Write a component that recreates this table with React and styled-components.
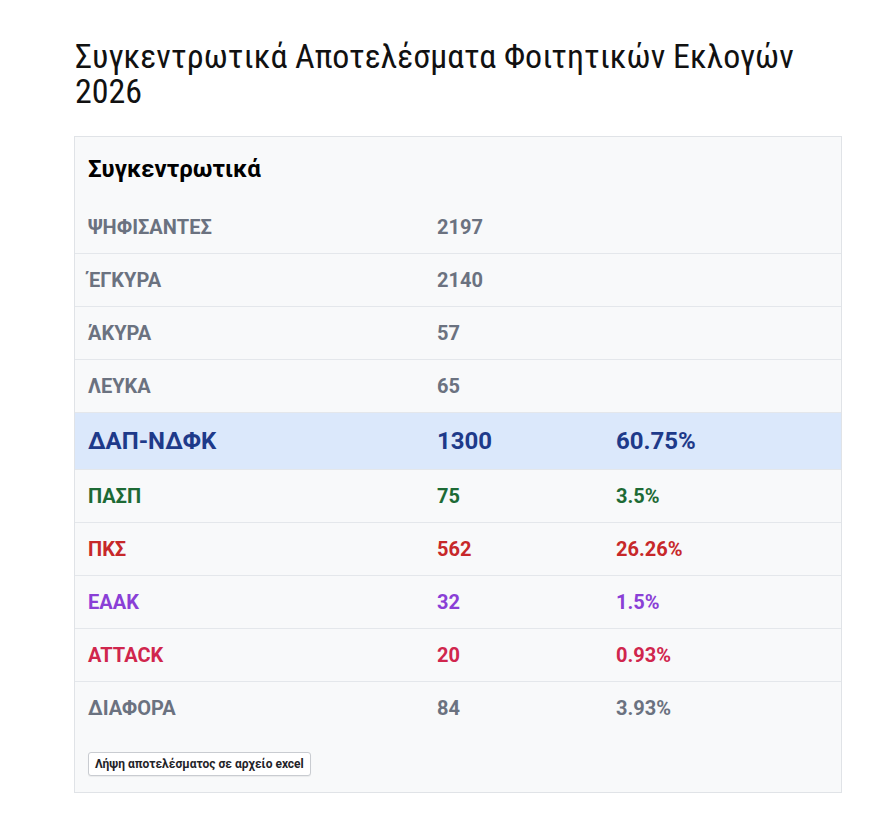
import React from 'react';
import styled, { createGlobalStyle } from 'styled-components';

const GlobalStyle = createGlobalStyle`
  html, body {
    margin: 0;
    padding: 0;
    background: #ffffff;
  }
  body {
    font-family: Roboto, "Noto Sans", Arial, sans-serif;
    color: #212529;
  }
`;

const Page = styled.div`
  padding: 39px 52px 20px 74px;
`;

const Title = styled.h1`
  max-width: 768px;
  margin: 0 0 27px 1px;
  font-family: "Liberation Sans Narrow", "Roboto Condensed", Roboto, sans-serif;
  font-weight: 400;
  font-size: 34px;
  line-height: 35px;
  color: #111111;
`;

const Card = styled.div`
  width: 768px;
  box-sizing: border-box;
  background: #f8f9fa;
  border: 1px solid #e0e3e7;
`;

const CardHeader = styled.div`
  padding: 16px 13px;
  font-size: 24px;
  line-height: 32px;
  font-weight: 700;
  color: #000000;
`;

const Row = styled.div`
  display: grid;
  grid-template-columns: 349px 179px 1fr;
  padding: ${p => (p.$lead ? '12px 13px' : '13px 13px')};
  font-size: ${p => (p.$lead ? '24px' : '20px')};
  line-height: ${p => (p.$lead ? '33px' : '27px')};
  font-weight: 700;
  color: ${p => p.$color};
  background: ${p => (p.$lead ? '#dbe8fb' : 'transparent')};
  border-top: ${p => (p.$first ? 'none' : '1px solid #e4e7eb')};
  margin-top: ${p => (p.$first ? '0' : '-1px')};
`;

const Cell = styled.div`
  white-space: nowrap;
`;

const Footer = styled.div`
  padding: 17px 13px 16px;
`;

const ExportButton = styled.button`
  font-family: Roboto, Arial, sans-serif;
  font-size: 12px;
  font-weight: 700;
  line-height: 16px;
  color: #1f2328;
  background: #ffffff;
  border: 1px solid #c9ccd1;
  border-radius: 3px;
  padding: 3px 6px 3px;
  box-shadow: 0 1px 1px rgba(0, 0, 0, 0.06);
  cursor: pointer;
`;

const GRAY = '#6b7280';

const totals = [
  { label: 'ΨΗΦΙΣΑΝΤΕΣ', value: 2197 },
  { label: 'ΈΓΚΥΡΑ', value: 2140 },
  { label: 'ΆΚΥΡΑ', value: 57 },
  { label: 'ΛΕΥΚΑ', value: 65 },
];

const parties = [
  { label: 'ΔΑΠ-ΝΔΦΚ', value: 1300, pct: '60.75%', color: '#1e3a8a', lead: true },
  { label: 'ΠΑΣΠ', value: 75, pct: '3.5%', color: '#1d6a35' },
  { label: 'ΠΚΣ', value: 562, pct: '26.26%', color: '#c7282a' },
  { label: 'ΕΑΑΚ', value: 32, pct: '1.5%', color: '#8a3fd6' },
  { label: 'ATTACK', value: 20, pct: '0.93%', color: '#d0264d' },
  { label: 'ΔΙΑΦΟΡΑ', value: 84, pct: '3.93%', color: GRAY },
];

export default function App() {
  return (
    <>
      <GlobalStyle />
      <Page>
        <Title>Συγκεντρωτικά Αποτελέσματα Φοιτητικών Εκλογών 2026</Title>
        <Card>
          <CardHeader>Συγκεντρωτικά</CardHeader>
          {totals.map((r, i) => (
            <Row key={r.label} $color={GRAY} $first={i === 0}>
              <Cell>{r.label}</Cell>
              <Cell>{r.value}</Cell>
              <Cell />
            </Row>
          ))}
          {parties.map(r => (
            <Row key={r.label} $color={r.color} $lead={r.lead}>
              <Cell>{r.label}</Cell>
              <Cell>{r.value}</Cell>
              <Cell>{r.pct}</Cell>
            </Row>
          ))}
          <Footer>
            <ExportButton>Λήψη αποτελέσματος σε αρχείο excel</ExportButton>
          </Footer>
        </Card>
      </Page>
    </>
  );
}
